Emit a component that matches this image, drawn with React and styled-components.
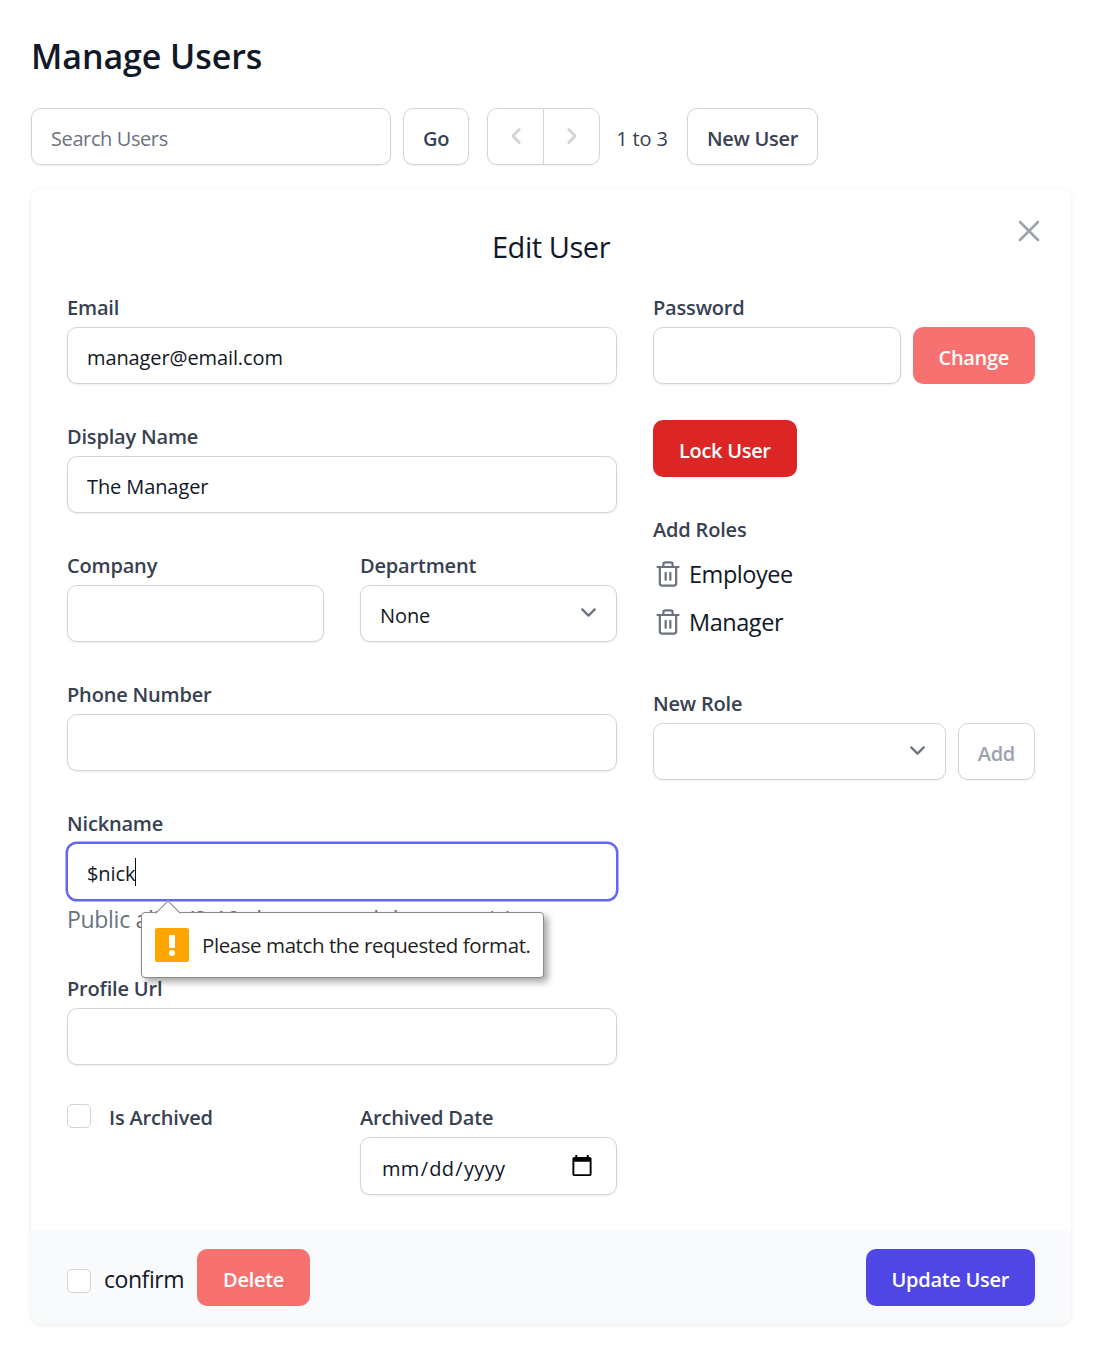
import React from "react";
import styled, { createGlobalStyle } from "styled-components";
import { Trash2 } from "lucide-react";

const GlobalStyle = createGlobalStyle`
  * { box-sizing: border-box; }
  body {
    margin: 0;
    background: #fff;
    font-family: "Open Sans", "Noto Sans", sans-serif;
    letter-spacing: -0.1px;
    color: #111827;
  }
`;

const Page = styled.div`
  padding: 31px 22px 27px 31px;
`;

const Heading = styled.h1`
  margin: 0;
  height: 52px;
  font-size: 34px;
  line-height: 50px;
  font-weight: 600;
  letter-spacing: -0.08px;
  color: #111827;
`;

const Toolbar = styled.div`
  display: flex;
  align-items: center;
  margin-top: 25px;
  height: 57px;
`;

const SearchInput = styled.input`
  width: 360px;
  height: 57px;
  padding: 4px 19px 0;
  border: 1px solid #d1d5db;
  border-radius: 10px;
  box-shadow: 0 1px 2px rgba(0, 0, 0, 0.08);
  font: inherit;
  font-size: 20px;
  letter-spacing: -0.4px;
  &::placeholder { color: #6b7280; opacity: 1; }
`;

const OutlineButton = styled.button`
  height: 57px;
  padding: 4px 19px 0;
  margin-left: ${(p) => p.$left || 0}px;
  background: #fff;
  border: 1px solid #d1d5db;
  border-radius: 10px;
  box-shadow: 0 1px 2px rgba(0, 0, 0, 0.06);
  font: inherit;
  font-size: 20px;
  font-weight: 600;
  letter-spacing: -0.3px;
  color: ${(p) => (p.$muted ? "#9ca3af" : "#374151")};
`;

const Pager = styled.div`
  display: flex;
  width: 113px;
  height: 57px;
  margin-left: 18px;
  border: 1px solid #d1d5db;
  border-radius: 10px;
  box-shadow: 0 1px 2px rgba(0, 0, 0, 0.06);
`;

const PagerCell = styled.div`
  flex: 1;
  display: flex;
  align-items: center;
  justify-content: center;
  padding-bottom: 2px;
  color: #d1d5db;
  & + & { border-left: 1px solid #d1d5db; }
`;

const PageCount = styled.span`
  margin-left: 16px;
  margin-right: 19px;
  padding-top: 4px;
  font-size: 20px;
  color: #374151;
`;

const Card = styled.div`
  position: relative;
  margin-top: 24px;
  width: 1040px;
  background: #fff;
  border-radius: 10px;
  box-shadow: 0 1px 4px rgba(0, 0, 0, 0.1);
`;

const CardBody = styled.div`
  padding: 36px;
`;

const CloseButton = styled.svg`
  position: absolute;
  top: 31px;
  right: 31px;
  width: 22px;
  height: 22px;
  color: #9ca3af;
`;

const CardTitle = styled.h2`
  margin: 0;
  height: 45px;
  text-align: center;
  font-size: 29px;
  line-height: 44px;
  font-weight: 400;
  letter-spacing: -0.45px;
  color: #111827;
`;

const Columns = styled.div`
  display: grid;
  grid-template-columns: 550px 382px;
  gap: 36px;
  margin-top: 26px;
`;

const Column = styled.div`
  display: flex;
  flex-direction: column;
`;

const Field = styled.div`
  position: relative;
  margin-bottom: ${(p) => p.$bottom ?? 41}px;
`;

const Label = styled.label`
  display: block;
  height: 24px;
  margin-bottom: 7px;
  font-size: 20px;
  line-height: 24px;
  font-weight: 600;
  letter-spacing: -0.18px;
  color: #374151;
`;

const TextInput = styled.input`
  display: block;
  width: 100%;
  height: 57px;
  padding: 4px 19px 0;
  background: #fff;
  border: 1px solid #d1d5db;
  border-radius: 10px;
  box-shadow: 0 1px 2px rgba(0, 0, 0, 0.08);
  font: inherit;
  font-size: 20px;
  letter-spacing: inherit;
  color: #111827;
  outline: none;
`;

const FocusedInput = styled(TextInput)`
  border-color: #6366f1;
  box-shadow: 0 0 0 1.5px #6366f1;
`;

const Caret = styled.span`
  position: absolute;
  left: 68px;
  top: 46px;
  width: 1px;
  height: 28px;
  background: #111;
`;

const Hint = styled.div`
  height: 30px;
  margin-top: 4px;
  font-size: 23px;
  line-height: 30px;
  letter-spacing: -0.3px;
  color: #6b7280;
  white-space: nowrap;
`;

const TwoUp = styled.div`
  display: grid;
  grid-template-columns: 257px 257px;
  gap: 36px;
`;

const SelectWrap = styled.div`
  position: relative;
  flex: ${(p) => (p.$grow ? 1 : "none")};
`;

const Select = styled.select`
  appearance: none;
  display: block;
  width: 100%;
  height: 57px;
  padding: 4px 19px 0;
  background: #fff;
  border: 1px solid #d1d5db;
  border-radius: 10px;
  box-shadow: 0 1px 2px rgba(0, 0, 0, 0.08);
  font: inherit;
  font-size: 20px;
  letter-spacing: inherit;
  color: #111827;
`;

const Chevron = styled.svg`
  position: absolute;
  right: 16px;
  top: 15px;
  width: 25px;
  height: 25px;
  color: #6b7280;
  pointer-events: none;
`;

const Tooltip = styled.div`
  position: absolute;
  left: 74px;
  top: 100px;
  z-index: 2;
  display: flex;
  align-items: center;
  gap: 13px;
  width: 403px;
  height: 66px;
  padding: 0 13px;
  background: #fff;
  border: 1px solid #8a8a8a;
  border-radius: 4px;
  box-shadow: 4px 4px 7px rgba(0, 0, 0, 0.35);
  font-size: 20.5px;
  letter-spacing: -0.42px;
  color: #1f1f1f;
  white-space: nowrap;
  &::before {
    content: "";
    position: absolute;
    left: 17px;
    top: -9px;
    width: 17px;
    height: 17px;
    background: #fff;
    border-left: 1px solid #8a8a8a;
    border-top: 1px solid #8a8a8a;
    transform: rotate(45deg);
  }
`;

const WarnBadge = styled.svg`
  position: relative;
  z-index: 1;
  flex: none;
  width: 34px;
  height: 34px;
`;

const TooltipText = styled.span`
  position: relative;
  z-index: 1;
`;

const ArchivedRow = styled.label`
  display: flex;
  align-items: flex-start;
  gap: 18px;
  margin-top: -2px;
  font-size: 20px;
  line-height: 24px;
  font-weight: 600;
  letter-spacing: -0.18px;
  color: #374151;
`;

const CheckBox = styled.span`
  display: block;
  flex: none;
  width: 24px;
  height: 24px;
  margin-top: ${(p) => p.$top || 0}px;
  background: #fff;
  border: 1px solid #d1d5db;
  border-radius: 5px;
`;

const ArchiveLabel = styled.span`
  display: block;
  padding-top: 2px;
`;

const DateInput = styled(TextInput)`
  height: 58px;
  padding: 4px 19px 0 20px;
  letter-spacing: 0.3px;
  &::-webkit-calendar-picker-indicator {
    width: 24px;
    height: 24px;
    margin: -4px 3px 0 0;
    padding: 0;
  }
`;

const PasswordRow = styled.div`
  display: flex;
  gap: 12px;
`;

const FillButton = styled.button`
  flex: none;
  height: 57px;
  padding: 3px 26px 0;
  background: ${(p) => p.$bg};
  border: none;
  border-radius: 10px;
  font: inherit;
  font-size: 20px;
  font-weight: 600;
  letter-spacing: -0.3px;
  color: #fff;
`;

const RoleList = styled.div`
  display: flex;
  flex-direction: column;
  gap: 14px;
  margin-top: 9px;
  margin-bottom: 52px;
`;

const RoleRow = styled.div`
  display: flex;
  align-items: center;
  gap: 7px;
  height: 34px;
  padding: 0 0 2px 1px;
  font-size: 23.5px;
  letter-spacing: -0.45px;
  color: #111827;
  svg { color: #6b7280; }
`;

const NewRoleRow = styled.div`
  display: flex;
  gap: 12px;
`;

const Footer = styled.div`
  display: flex;
  align-items: center;
  justify-content: space-between;
  height: 93px;
  padding: 0 36px;
  background: #f9fafb;
  border-radius: 0 0 10px 10px;
`;

const FooterLeft = styled.div`
  display: flex;
  align-items: center;
`;

const ConfirmText = styled.span`
  margin: 3px 13px 0;
  font-size: 23px;
  letter-spacing: -0.45px;
  color: #111827;
`;

const PagerChevron = ({ d }) => (
  <svg width="26" height="26" viewBox="0 0 24 24" fill="none" stroke="currentColor" strokeWidth="2.6" strokeLinecap="round" strokeLinejoin="round">
    <path d={d} />
  </svg>
);

const DownChevron = () => (
  <Chevron viewBox="0 0 24 24" fill="none" stroke="currentColor" strokeWidth="2.2" strokeLinecap="round" strokeLinejoin="round">
    <path d="M6 9l6 6 6-6" />
  </Chevron>
);

const roles = ["Employee", "Manager"];

export default function App() {
  return (
    <>
      <GlobalStyle />
      <Page>
        <Heading>Manage Users</Heading>
        <Toolbar>
          <SearchInput placeholder="Search Users" readOnly />
          <OutlineButton $left={12}>Go</OutlineButton>
          <Pager>
            <PagerCell><PagerChevron d="M15 6l-6 6 6 6" /></PagerCell>
            <PagerCell><PagerChevron d="M9 6l6 6-6 6" /></PagerCell>
          </Pager>
          <PageCount>1 to 3</PageCount>
          <OutlineButton>New User</OutlineButton>
        </Toolbar>

        <Card>
          <CloseButton viewBox="0 0 22 22" fill="none" stroke="currentColor" strokeWidth="2.6" strokeLinecap="round">
            <path d="M2 2l18 18M20 2L2 20" />
          </CloseButton>
          <CardBody>
            <CardTitle>Edit User</CardTitle>
            <Columns>
              <Column>
                <Field>
                  <Label>Email</Label>
                  <TextInput defaultValue="manager@email.com" />
                </Field>
                <Field>
                  <Label>Display Name</Label>
                  <TextInput defaultValue="The Manager" />
                </Field>
                <TwoUp>
                  <Field>
                    <Label>Company</Label>
                    <TextInput />
                  </Field>
                  <Field>
                    <Label>Department</Label>
                    <SelectWrap>
                      <Select defaultValue="None"><option>None</option></Select>
                      <DownChevron />
                    </SelectWrap>
                  </Field>
                </TwoUp>
                <Field>
                  <Label>Phone Number</Label>
                  <TextInput />
                </Field>
                <Field $bottom={43}>
                  <Label>Nickname</Label>
                  <FocusedInput defaultValue="$nick" />
                  <Caret />
                  <Hint>Public alias (2-10 characters alphanumeric)</Hint>
                  <Tooltip>
                    <WarnBadge viewBox="0 0 34 34">
                      <rect width="34" height="34" rx="2" fill="#ffa500" />
                      <rect x="14" y="7" width="6" height="13" rx="1" fill="#fff" />
                      <circle cx="17" cy="25" r="3" fill="#fff" />
                    </WarnBadge>
                    <TooltipText>Please match the requested format.</TooltipText>
                  </Tooltip>
                </Field>
                <Field>
                  <Label>Profile Url</Label>
                  <TextInput />
                </Field>
                <TwoUp>
                  <Field $bottom={0}>
                    <ArchivedRow>
                      <CheckBox />
                      <ArchiveLabel>Is Archived</ArchiveLabel>
                    </ArchivedRow>
                  </Field>
                  <Field $bottom={0}>
                    <Label>Archived Date</Label>
                    <DateInput type="date" />
                  </Field>
                </TwoUp>
              </Column>

              <Column>
                <Field $bottom={36}>
                  <Label>Password</Label>
                  <PasswordRow>
                    <TextInput />
                    <FillButton $bg="#f87171">Change</FillButton>
                  </PasswordRow>
                </Field>
                <Field>
                  <FillButton $bg="#dc2626">Lock User</FillButton>
                </Field>
                <Label>Add Roles</Label>
                <RoleList>
                  {roles.map((role) => (
                    <RoleRow key={role}>
                      <Trash2 size={28} strokeWidth={1.9} />
                      {role}
                    </RoleRow>
                  ))}
                </RoleList>
                <Label>New Role</Label>
                <NewRoleRow>
                  <SelectWrap $grow>
                    <Select />
                    <DownChevron />
                  </SelectWrap>
                  <OutlineButton $muted>Add</OutlineButton>
                </NewRoleRow>
              </Column>
            </Columns>
          </CardBody>
          <Footer>
            <FooterLeft>
              <CheckBox $top={7} />
              <ConfirmText>confirm</ConfirmText>
              <FillButton $bg="#f87171">Delete</FillButton>
            </FooterLeft>
            <FillButton $bg="#4f46e5">Update User</FillButton>
          </Footer>
        </Card>
      </Page>
    </>
  );
}
